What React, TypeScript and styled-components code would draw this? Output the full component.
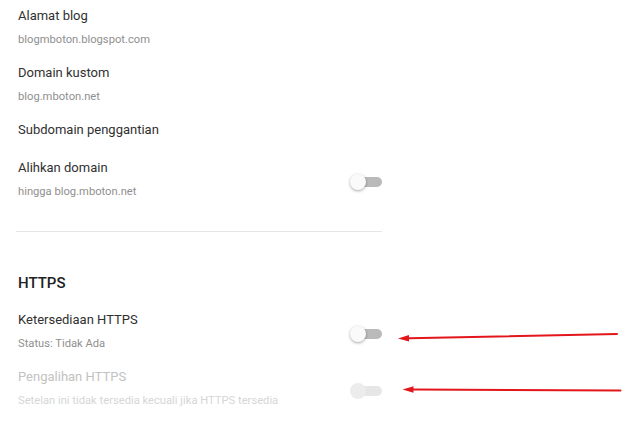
import React from 'react';
import styled, { createGlobalStyle } from 'styled-components';

const GlobalStyle = createGlobalStyle`
  html, body {
    margin: 0;
    padding: 0;
    background: #ffffff;
  }
  body {
    font-family: Roboto, "Noto Sans", Arial, sans-serif;
    -webkit-font-smoothing: antialiased;
  }
`;

const Page = styled.div`
  position: relative;
  width: 640px;
  height: 428px;
  overflow: hidden;
`;

const Settings = styled.div`
  width: 364px;
  padding-left: 18px;
`;

const Row = styled.div<{ $single?: boolean }>`
  display: flex;
  align-items: center;
  justify-content: space-between;
  padding: 6px 0 ${({ $single }) => ($single ? '12px' : '7px')};
`;

const RowText = styled.div`
  display: flex;
  flex-direction: column;
`;

const Title = styled.div<{ $disabled?: boolean }>`
  font-size: 13px;
  line-height: 20px;
  color: ${({ $disabled }) => ($disabled ? '#c2c2c2' : '#303030')};
`;

const Subtitle = styled.div<{ $disabled?: boolean }>`
  margin-top: 4px;
  font-size: 11.2px;
  line-height: 20px;
  color: ${({ $disabled }) => ($disabled ? '#d6d6d6' : '#8f8f8f')};
`;

const Divider = styled.div`
  margin: 22px 0 0 -2px;
  width: 366px;
  height: 1px;
  background: #e6e6e6;
`;

const Heading = styled.div`
  margin: 41px 0 11px;
  font-size: 15px;
  line-height: 20px;
  font-weight: 500;
  color: #212121;
`;

const Switch = styled.div<{ $disabled?: boolean }>`
  position: relative;
  width: 32px;
  height: 16px;
  margin-top: 3px;
  flex-shrink: 0;

  &::before {
    content: '';
    position: absolute;
    right: 0;
    top: 3px;
    width: 28px;
    height: 10px;
    border-radius: 5px;
    background: ${({ $disabled }) => ($disabled ? '#e6e6e6' : '#bababa')};
  }

  &::after {
    content: '';
    position: absolute;
    left: 0;
    top: 0;
    width: 16px;
    height: 16px;
    border-radius: 50%;
    background: ${({ $disabled }) => ($disabled ? '#ececec' : '#fafafa')};
    box-shadow: ${({ $disabled }) =>
      $disabled ? 'none' : '0 1px 3px rgba(0, 0, 0, 0.35)'};
  }
`;

const Annotations = styled.svg`
  position: absolute;
  left: 0;
  top: 0;
  pointer-events: none;
`;

type Item = {
  title: string;
  sub?: string;
  toggle?: boolean;
  disabled?: boolean;
};

const blogItems: Item[] = [
  { title: 'Alamat blog', sub: 'blogmboton.blogspot.com' },
  { title: 'Domain kustom', sub: 'blog.mboton.net' },
  { title: 'Subdomain penggantian' },
  { title: 'Alihkan domain', sub: 'hingga blog.mboton.net', toggle: true },
];

const httpsItems: Item[] = [
  { title: 'Ketersediaan HTTPS', sub: 'Status: Tidak Ada', toggle: true },
  {
    title: 'Pengalihan HTTPS',
    sub: 'Setelan ini tidak tersedia kecuali jika HTTPS tersedia',
    toggle: true,
    disabled: true,
  },
];

const SettingRow: React.FC<{ item: Item }> = ({ item }) => (
  <Row $single={!item.sub}>
    <RowText>
      <Title $disabled={item.disabled}>{item.title}</Title>
      {item.sub && <Subtitle $disabled={item.disabled}>{item.sub}</Subtitle>}
    </RowText>
    {item.toggle && <Switch $disabled={item.disabled} />}
  </Row>
);

const Arrow: React.FC<{ x1: number; y1: number; x2: number; y2: number }> = ({ x1, y1, x2, y2 }) => {
  // head points at (x2, y2)
  const ang = Math.atan2(y2 - y1, x2 - x1);
  const len = 11;
  const half = 3.2;
  const bx = x2 - Math.cos(ang) * len;
  const by = y2 - Math.sin(ang) * len;
  const px = -Math.sin(ang) * half;
  const py = Math.cos(ang) * half;
  return (
    <g>
      <line x1={x1} y1={y1} x2={bx} y2={by} stroke="#e3161b" strokeWidth={2} strokeLinecap="round" />
      <polygon
        points={`${x2},${y2} ${bx + px},${by + py} ${bx - px},${by - py}`}
        fill="#e3161b"
      />
    </g>
  );
};

export default function App() {
  return (
    <Page>
      <GlobalStyle />
      <Settings>
        {blogItems.map((item) => (
          <SettingRow key={item.title} item={item} />
        ))}
        <Divider />
        <Heading>HTTPS</Heading>
        {httpsItems.map((item) => (
          <SettingRow key={item.title} item={item} />
        ))}
      </Settings>
      <Annotations width={640} height={428} viewBox="0 0 640 428">
        <Arrow x1={617} y1={334} x2={398} y2={338.5} />
        <Arrow x1={620.5} y1={390.5} x2={402.5} y2={389.5} />
      </Annotations>
    </Page>
  );
}
